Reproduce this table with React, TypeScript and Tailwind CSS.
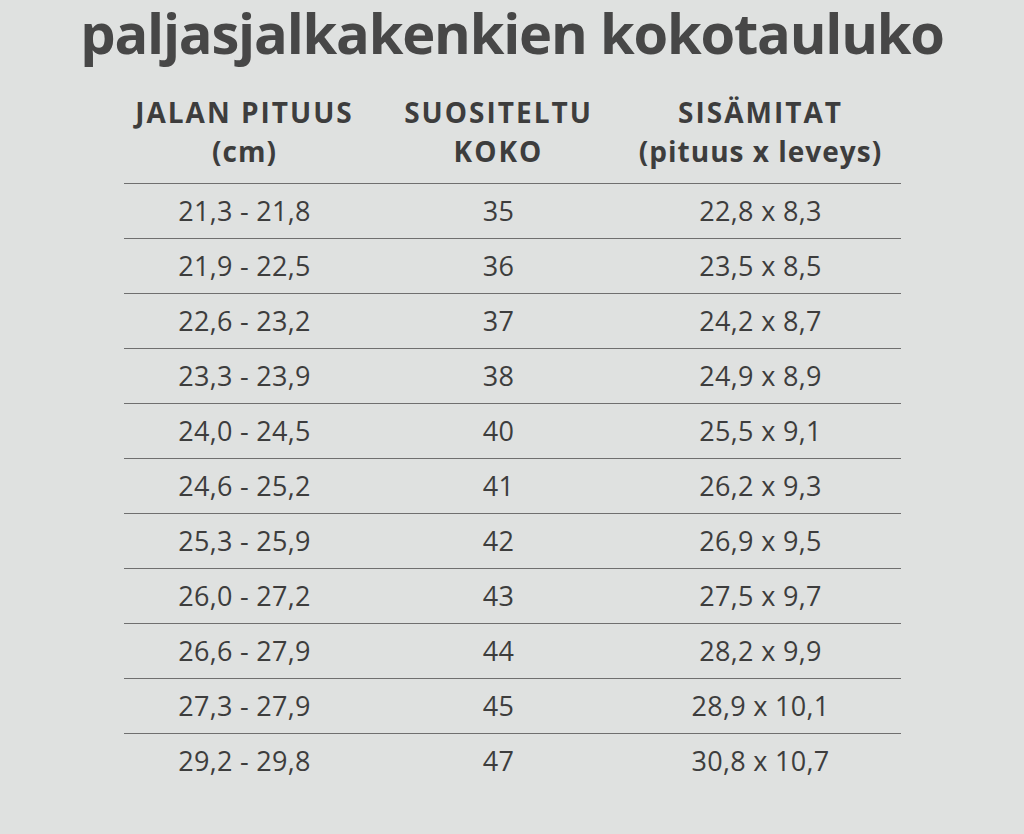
import React from "react";

const rows: [string, string, string][] = [
  ["21,3 - 21,8", "35", "22,8 x 8,3"],
  ["21,9 - 22,5", "36", "23,5 x 8,5"],
  ["22,6 - 23,2", "37", "24,2 x 8,7"],
  ["23,3 - 23,9", "38", "24,9 x 8,9"],
  ["24,0 - 24,5", "40", "25,5 x 9,1"],
  ["24,6 - 25,2", "41", "26,2 x 9,3"],
  ["25,3 - 25,9", "42", "26,9 x 9,5"],
  ["26,0 - 27,2", "43", "27,5 x 9,7"],
  ["26,6 - 27,9", "44", "28,2 x 9,9"],
  ["27,3 - 27,9", "45", "28,9 x 10,1"],
  ["29,2 - 29,8", "47", "30,8 x 10,7"],
];

export default function App() {
  return (
    <div
      className="w-[1024px] h-[834px] bg-[#dfe1e0] text-[#3d3d3d] flex flex-col items-center"
      style={{ fontFamily: '"Open Sans", "Liberation Sans", sans-serif' }}
    >
      <h1 className="pt-[1px] text-[56px] leading-[62px] font-bold text-[#474747] tracking-[-1.2px] whitespace-nowrap">
        paljasjalkakenkien kokotauluko
      </h1>
      <div className="w-[777px] mt-[30px]">
        <div className="grid grid-cols-[242px_266px_1fr] pr-[11px] pb-[12px] text-[28px] leading-[39px] font-bold text-center tracking-[2px]">
          <div>
            JALAN PITUUS
            <br />
            <span className="tracking-[1px]">(cm)</span>
          </div>
          <div>
            SUOSITELTU
            <br />
            KOKO
          </div>
          <div>
            SISÄMITAT
            <br />
            <span className="tracking-[1px]">(pituus x leveys)</span>
          </div>
        </div>
        {rows.map((r, i) => (
          <div
            key={i}
            className="grid grid-cols-[242px_266px_1fr] pr-[11px] h-[55px] items-center border-t border-[#6f6f6f] text-[27px] text-center tracking-[0.3px]"
          >
            <div>{r[0]}</div>
            <div>{r[1]}</div>
            <div>{r[2]}</div>
          </div>
        ))}
      </div>
    </div>
  );
}
